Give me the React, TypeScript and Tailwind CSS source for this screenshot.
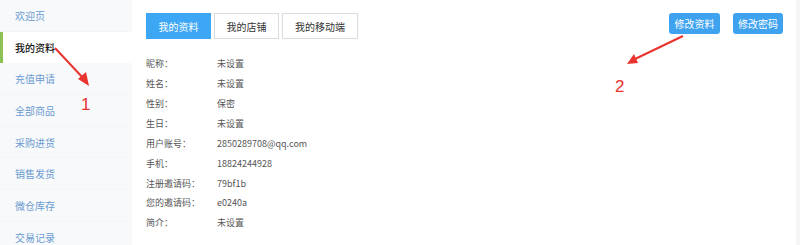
import React from "react";

const menu = ["欢迎页", "我的资料", "充值申请", "全部商品", "采购进货", "销售发货", "微仓库存", "交易记录"];
const rows: [string, string][] = [
  ["昵称：", "未设置"],
  ["姓名：", "未设置"],
  ["性别：", "保密"],
  ["生日：", "未设置"],
  ["用户账号：", "2850289708@qq.com"],
  ["手机：", "18824244928"],
  ["注册邀请码：", "79bf1b"],
  ["您的邀请码：", "e0240a"],
  ["简介：", "未设置"],
];

export default function App() {
  return (
    <div
      className="relative flex w-[800px] h-[245px] overflow-hidden bg-white"
      style={{ fontFamily: '"Microsoft YaHei", "Noto Sans CJK SC", "Liberation Sans", sans-serif' }}
    >
      <div className="w-[132px] shrink-0 bg-[#f8f9fa] flex flex-col">
        {menu.map((m, i) => (
          <div
            key={m}
            className={
              i === 1
                ? "h-[31.7px] shrink-0 flex items-center pl-[12px] bg-white border-l-[3px] border-[#8dc153] text-[10px] font-medium text-[#111]"
                : "h-[31.7px] shrink-0 flex items-center pl-[15px] text-[10px] text-[#6a9bd1] border-b border-[#f4f5f7]"
            }
          >
            {m}
          </div>
        ))}
      </div>
      <div className="flex-1 flex flex-col pl-[14px] pt-[13px]">
        <div className="flex items-start">
          <div className="flex gap-[3px]">
            <div className="w-[65px] h-[26px] flex items-center justify-center bg-[#3ea7f5] text-white text-[10px]">我的资料</div>
            <div className="w-[65px] h-[26px] flex items-center justify-center border border-[#dcdcdc] text-[#333] text-[10px]">我的店铺</div>
            <div className="w-[76px] h-[26px] flex items-center justify-center border border-[#dcdcdc] text-[#333] text-[10px]">我的移动端</div>
          </div>
          <div className="flex-1" />
          <div className="flex gap-[13px] pr-[13px]">
            <div className="w-[51px] h-[21px] rounded-[3px] bg-[#3ea2ef] text-white text-[10px] flex items-center justify-center">修改资料</div>
            <div className="w-[50px] h-[21px] rounded-[3px] bg-[#3ea2ef] text-white text-[10px] flex items-center justify-center">修改密码</div>
          </div>
        </div>
        <div className="flex flex-col mt-[15px]">
          {rows.map(([k, v]) => (
            <div key={k} className="flex items-center h-[19.9px] text-[9px] text-[#555]">
              <div className="w-[71px] shrink-0">{k}</div>
              <div>{v}</div>
            </div>
          ))}
        </div>
      </div>
      <div className="w-[4px] shrink-0 bg-[#f5f6f7]" />
      <svg className="absolute inset-0 pointer-events-none" width="800" height="245">
        <line x1="55" y1="48" x2="84" y2="79" stroke="#e8332e" strokeWidth="2" />
        <polygon points="89,86 78,79 86,72" fill="#e8332e" />
        <line x1="683" y1="36" x2="635" y2="59" stroke="#e8332e" strokeWidth="2" />
        <polygon points="627,64 634,54 638,63" fill="#e8332e" />
      </svg>
      <div className="absolute left-[81px] top-[96px] text-[17px] leading-none text-[#e8332e]" style={{ fontFamily: '"Liberation Sans", sans-serif' }}>1</div>
      <div className="absolute left-[615px] top-[78px] text-[17px] leading-none text-[#e8332e]" style={{ fontFamily: '"Liberation Sans", sans-serif' }}>2</div>
    </div>
  );
}
